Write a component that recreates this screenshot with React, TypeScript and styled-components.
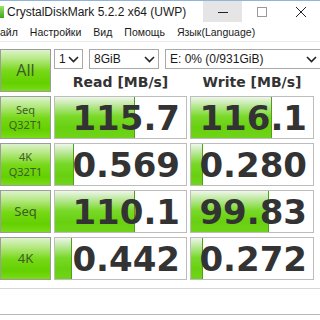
import * as React from "react";
import styled, { createGlobalStyle } from "styled-components";

const GlobalStyle = createGlobalStyle`
    html, body {
        margin: 0;
        padding: 0;
        background: #ffffff;
        overflow: hidden;
    }
    #root {
        width: 320px;
        height: 320px;
        overflow: hidden;
    }
`;

const Window = styled.div`
    width: 320px;
    height: 320px;
    display: flex;
    flex-direction: column;
    background: #ffffff;
    font-family: "Liberation Sans", "Noto Sans", sans-serif;
    overflow: hidden;
`;

const TitleBar = styled.div`
    height: 22px;
    display: flex;
    align-items: stretch;
    border-top: 1px solid #8fb3d9;
    box-sizing: border-box;
`;

const AppIcon = styled.div`
    width: 4px;
    margin: 5px 3px 4px 0;
    background: linear-gradient(180deg, #9be36a, #3aa51a);
`;

const Title = styled.div`
    flex: 1;
    display: flex;
    align-items: center;
    font-size: 12px;
    color: #1a1a1a;
`;

const CaptionButton = styled.div<{ $hover?: boolean }>`
    width: 39px;
    display: flex;
    align-items: center;
    justify-content: center;
    background: ${props => props.$hover ? "#e5e5e5" : "transparent"};
    flex-shrink: 0;
`;

const MenuBar = styled.div`
    height: 19px;
    display: flex;
    align-items: center;
    gap: 12px;
    margin-left: -8px;
    font-size: 10.5px;
    color: #1a1a1a;
    border-bottom: 1px solid #ececec;
`;

const Board = styled.div`
    display: grid;
    grid-template-columns: 51px 133px 124px 1fr;
    grid-auto-rows: 43px;
    column-gap: 3px;
    row-gap: 4px;
    margin-top: 7px;
`;

const TestButton = styled.div<{ $size: number }>`
    grid-column: 1;
    box-sizing: border-box;
    border: 1px solid #9c9c9c;
    background: linear-gradient(180deg, #dcf3cb 0%, #b6e884 22%, #76d816 52%, #64d000 80%, #7adc16 100%);
    display: flex;
    align-items: center;
    justify-content: center;
    text-align: center;
    color: #3f5c27;
    font-family: "Noto Sans", "Liberation Sans", sans-serif;
    font-size: ${props => props.$size}px;
    line-height: 1.3;
`;

const HeaderCell = styled.div`
    grid-column: 2 / 5;
    display: grid;
    grid-template-columns: 133px 124px;
    column-gap: 3px;
    grid-template-rows: 20px 1fr;
`;

const Selects = styled.div`
    grid-column: 1 / 3;
    display: flex;
    gap: 6px;
    margin-right: -8px;
`;

const Select = styled.div<{ $width: number }>`
    width: ${props => props.$width}px;
    box-sizing: border-box;
    border: 1px solid #a9a9a9;
    background: #ffffff;
    display: flex;
    align-items: center;
    justify-content: space-between;
    padding: 0 3px 0 4px;
    font-size: 12px;
    color: #1a1a1a;
    flex-shrink: 0;
`;

const ColumnTitle = styled.div`
    display: flex;
    align-items: center;
    justify-content: center;
    font-family: "DejaVu Sans", sans-serif;
    font-weight: bold;
    font-size: 14px;
    color: #333333;
    padding-top: 2px;
`;

const ValueBox = styled.div`
    position: relative;
    box-sizing: border-box;
    border: 1px solid #bdbdbd;
    background: #ffffff;
    overflow: hidden;
`;

const Bar = styled.div`
    position: absolute;
    left: 0;
    top: 0;
    bottom: 0;
    background: linear-gradient(180deg, #eef7ea 0%, #b8e795 22%, #78d928 48%, #68d010 75%, #70d41a 100%);
    border-right: 1px solid #4f9f1a;
`;

const Value = styled.div`
    position: relative;
    height: 100%;
    display: flex;
    align-items: center;
    justify-content: flex-end;
    padding-right: 6px;
    font-family: "DejaVu Sans", sans-serif;
    font-weight: bold;
    font-size: 34px;
    color: #333333;
`;

const Comment = styled.div`
    margin: 8px -4px 0 -4px;
    height: 25px;
    border-top: 1px solid #d6d6d6;
    border-bottom: 1px solid #b8b8b8;
    background: #ffffff;
`;

const Chevron = () => <svg width="11" height="7" viewBox="0 0 11 7">
    <path d="M1 1 L5.5 5.5 L10 1" fill="none" stroke="#222" strokeWidth="1.6"/>
</svg>;

const rows = [
    { label: ["Seq", "Q32T1"], read: "115.7", readBar: 79, write: "116.1", writeBar: 80 },
    { label: ["4K", "Q32T1"], read: "0.569", readBar: 18, write: "0.280", writeBar: 11 },
    { label: ["Seq"], read: "110.1", readBar: 79, write: "99.83", writeBar: 77 },
    { label: ["4K"], read: "0.442", readBar: 16, write: "0.272", writeBar: 11 },
];

const menu = ["Файл", "Настройки", "Вид", "Помощь", "Язык(Language)"];

export default function App() {
    return <Window>
        <GlobalStyle/>
        <TitleBar>
            <AppIcon/>
            <Title>CrystalDiskMark 5.2.2 x64 (UWP)</Title>
            <CaptionButton $hover>
                <svg width="10" height="10" viewBox="0 0 10 10"><path d="M0 5.5 H10" stroke="#222" strokeWidth="1"/></svg>
            </CaptionButton>
            <CaptionButton>
                <svg width="10" height="10" viewBox="0 0 10 10"><rect x="0.5" y="0.5" width="9" height="9" fill="none" stroke="#999" strokeWidth="1"/></svg>
            </CaptionButton>
            <CaptionButton>
                <svg width="10" height="10" viewBox="0 0 10 10"><path d="M0 0 L10 10 M10 0 L0 10" stroke="#222" strokeWidth="1"/></svg>
            </CaptionButton>
        </TitleBar>
        <MenuBar>
            {menu.map((item, index) => <span key={index}>{item}</span>)}
        </MenuBar>
        <Board>
            <TestButton $size={16}>All</TestButton>
            <HeaderCell>
                <Selects>
                    <Select $width={29}>1<Chevron/></Select>
                    <Select $width={70}>8GiB<Chevron/></Select>
                    <Select $width={156}>E: 0% (0/931GiB)<Chevron/></Select>
                </Selects>
                <ColumnTitle>Read [MB/s]</ColumnTitle>
                <ColumnTitle>Write [MB/s]</ColumnTitle>
            </HeaderCell>
            {rows.map((row, index) => <React.Fragment key={index}>
                <TestButton $size={row.label.length > 1 ? 11 : 13}>
                    <div>{row.label.map((line, i) => <div key={i}>{line}</div>)}</div>
                </TestButton>
                <ValueBox>
                    <Bar style={{width: row.readBar}}/>
                    <Value>{row.read}</Value>
                </ValueBox>
                <ValueBox>
                    <Bar style={{width: row.writeBar}}/>
                    <Value>{row.write}</Value>
                </ValueBox>
                <div/>
            </React.Fragment>)}
        </Board>
        <Comment/>
    </Window>;
}
